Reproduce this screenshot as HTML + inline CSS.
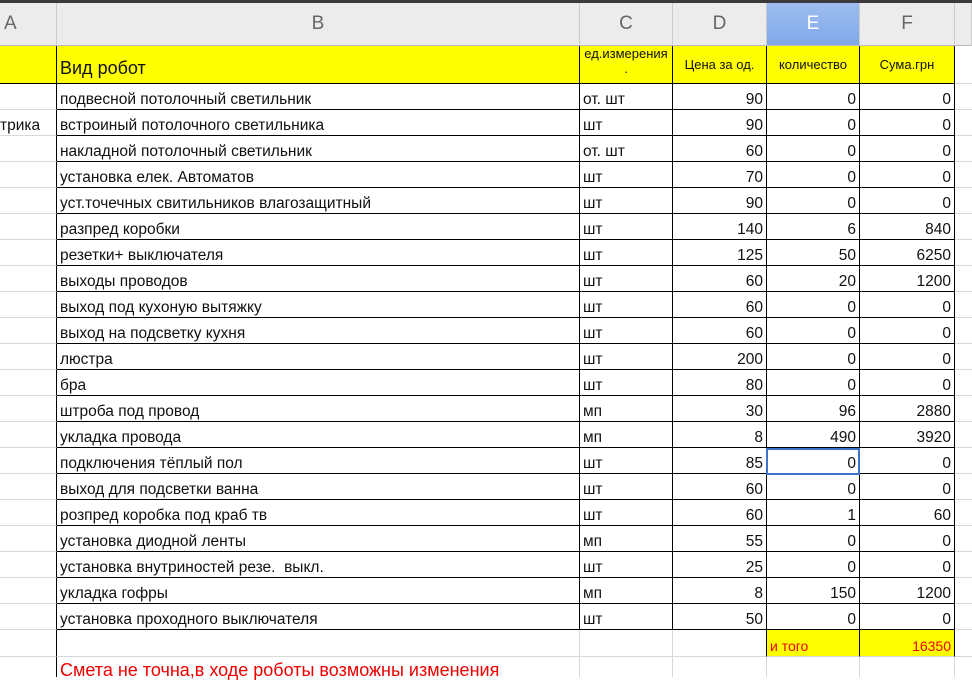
<!DOCTYPE html>
<html><head><meta charset="utf-8"><style>
*{margin:0;padding:0;box-sizing:border-box}
body{width:972px;height:666px;overflow:hidden;background:#fff;font-family:"Liberation Sans",sans-serif;position:relative}
.r{position:absolute;left:0;width:972px;display:flex}
.c{height:100%;display:flex;align-items:flex-end;padding:0 3px 0 3px;font-size:15.5px;color:#111;white-space:nowrap;overflow:hidden;border-right:1px solid #000;border-bottom:1px solid #000}
.a{width:57px;border-right:1px solid #000;border-bottom:1px solid #d8d8d8}
.b{width:523px}.cc{width:93px}.d{width:94px;justify-content:flex-end}.e{width:93px;justify-content:flex-end}.f{width:95px;justify-content:flex-end}
.g{flex:1;border-right:none;border-bottom:1px solid #d8d8d8}
.hd{top:0;height:46px;background:#ececec;border-top:3px solid #3a3a3a}
.hd .c{justify-content:center;align-items:center;font-size:19px;color:#666;border-right:1px solid #ccc;border-bottom:1px solid #bbb;padding:0}
.hd .a{justify-content:flex-start;padding-left:4px}
.hd .e{background:linear-gradient(#9dbdf0,#80a8ea);color:#fff}
.y .c{background:#ffff00}
.y .g{background:#fff}
</style></head><body>
<div class="r hd"><div class="c a">A</div><div class="c b">B</div><div class="c cc">C</div><div class="c d">D</div><div class="c e">E</div><div class="c f">F</div><div class="c g"></div></div>
<div class="r y" style="top:46px;height:38px">
<div class="c a" style="border-bottom:1px solid #000"></div>
<div class="c b" style="font-size:18px;padding-bottom:4px">Вид робот</div>
<div class="c cc" style="flex-direction:column;align-items:center;justify-content:flex-start;font-size:13px;padding:0;line-height:15px"><span>ед.измерения</span><span>.</span></div>
<div class="c d" style="justify-content:center;align-items:center;font-size:13px">Цена за од.</div>
<div class="c e" style="justify-content:center;align-items:center;font-size:13px">количество</div>
<div class="c f" style="justify-content:center;align-items:center;font-size:13px">Сума.грн</div>
<div class="c g"></div></div>
<div id="rows"></div>
<div class="r" style="top:630px;height:27px">
<div class="c a"></div><div class="c b" style="border-bottom-color:#d8d8d8;border-right-color:#d8d8d8"></div><div class="c cc" style="border-bottom-color:#d8d8d8;border-right-color:#d8d8d8"></div><div class="c d" style="border-bottom-color:#d8d8d8"></div>
<div class="c e" style="background:#ff0;color:#e00;justify-content:flex-start;font-size:14px;border-bottom-color:#d8d8d8;padding-bottom:2px">и того</div>
<div class="c f" style="background:#ff0;color:#e00;font-size:14px;border-bottom-color:#d8d8d8;padding-bottom:2px">16350</div><div class="c g"></div></div>
<div class="r" style="top:657px;height:20px">
<div class="c a" style="border-bottom:none"></div><div class="c b" style="overflow:visible;color:#e00;font-size:18px;align-items:flex-start;padding-top:3px;border-right-color:#d8d8d8;border-bottom:none">Смета не точна,в ходе роботы возможны изменения</div><div class="c cc" style="border-right-color:#d8d8d8;border-bottom:none"></div><div class="c d" style="border-right-color:#d8d8d8;border-bottom:none"></div><div class="c e" style="border-right-color:#d8d8d8;border-bottom:none"></div><div class="c f" style="border-right-color:#d8d8d8;border-bottom:none"></div></div>
<div style="position:absolute;left:766px;top:448px;width:94px;height:27px;border:2px solid #3b74c8"></div>
<script>
var d=[["подвесной потолочный светильник","от. шт",90,0,0],["встроиный потолочного светильника","шт",90,0,0],["накладной потолочный светильник","от. шт",60,0,0],["установка елек. Автоматов","шт",70,0,0],["уст.точечных свитильников влагозащитный","шт",90,0,0],["разпред коробки","шт",140,6,840],["резетки+ выключателя","шт",125,50,6250],["выходы проводов","шт",60,20,1200],["выход под кухоную вытяжку","шт",60,0,0],["выход на подсветку кухня","шт",60,0,0],["люстра","шт",200,0,0],["бра","шт",80,0,0],["штроба под провод","мп",30,96,2880],["укладка провода","мп",8,490,3920],["подключения тёплый пол","шт",85,0,0],["выход для подсветки ванна","шт",60,0,0],["розпред коробка под краб тв","шт",60,1,60],["установка диодной ленты","мп",55,0,0],["установка внутриностей резе.&nbsp; выкл.","шт",25,0,0],["укладка гофры","мп",8,150,1200],["установка проходного выключателя","шт",50,0,0]];
var h="";d.forEach(function(r,i){h+='<div class="r" style="top:'+(84+i*26)+'px;height:26px"><div class="c a"'+(i==1?' style="padding-left:0"':'')+'>'+(i==1?'трика':'')+'</div><div class="c b">'+r[0]+'</div><div class="c cc">'+r[1]+'</div><div class="c d">'+r[2]+'</div><div class="c e">'+r[3]+'</div><div class="c f">'+r[4]+'</div><div class="c g"></div></div>'});
document.getElementById("rows").outerHTML=h;
</script>
</body></html>
